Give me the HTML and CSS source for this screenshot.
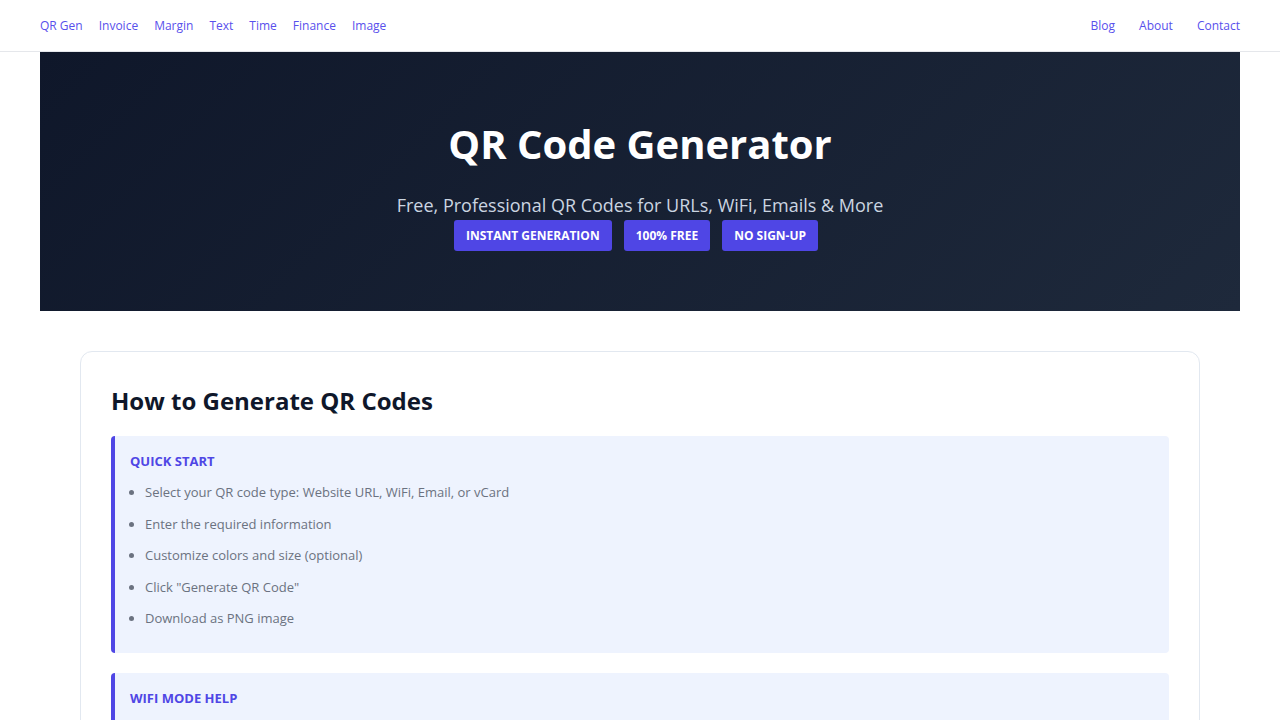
FILE: index.html
```html
<!DOCTYPE html>
<html lang="en">
<head>
  <meta charset="UTF-8">
  <meta name="viewport" content="width=device-width, initial-scale=1.0">
  <title>QR Code Generator</title>
  <link rel="stylesheet" href="styles.css">
</head>
<body>
  <header class="topbar">
    <nav class="nav-left">
      <a href="#">QR Gen</a>
      <a href="#">Invoice</a>
      <a href="#">Margin</a>
      <a href="#">Text</a>
      <a href="#">Time</a>
      <a href="#">Finance</a>
      <a href="#">Image</a>
    </nav>
    <nav class="nav-right">
      <a href="#">Blog</a>
      <a href="#">About</a>
      <a href="#">Contact</a>
    </nav>
  </header>

  <section class="hero">
    <h1>QR Code Generator</h1>
    <p class="subtitle">Free, Professional QR Codes for URLs, WiFi, Emails &amp; More</p>
    <div class="badges">
      <span class="badge">Instant Generation</span>
      <span class="badge">100% Free</span>
      <span class="badge">No Sign-Up</span>
    </div>
  </section>

  <main class="card">
    <h2>How to Generate QR Codes</h2>

    <div class="help-box">
      <h3>Quick Start</h3>
      <ul>
        <li>Select your QR code type: Website URL, WiFi, Email, or vCard</li>
        <li>Enter the required information</li>
        <li>Customize colors and size (optional)</li>
        <li>Click "Generate QR Code"</li>
        <li>Download as PNG image</li>
      </ul>
    </div>

    <div class="help-box">
      <h3>WiFi Mode Help</h3>
      <ul>
        <li>Enter your network name (SSID) exactly as it appears</li>
        <li>Choose the security type used by your router</li>
        <li>Enter the password and generate the code</li>
      </ul>
    </div>
  </main>
</body>
</html>
```

FILE: styles.css
```css
* {
  box-sizing: border-box;
}

body {
  margin: 0;
  font-family: "Open Sans", "Noto Sans", sans-serif;
  background: #ffffff;
  color: #0f172a;
}

.topbar {
  display: flex;
  justify-content: space-between;
  align-items: center;
  height: 52px;
  padding: 0 40px 1px;
  border-bottom: 1px solid #e5e7eb;
  background: #fff;
}

.nav-left,
.nav-right {
  display: flex;
  gap: 16px;
}

.nav-right {
  gap: 24px;
}

.topbar a {
  color: #5850ec;
  text-decoration: none;
  font-size: 12px;
}

.hero {
  margin: 0 40px;
  height: 259px;
  background: linear-gradient(135deg, #0f172a 0%, #1e293b 100%);
  text-align: center;
  padding-top: 64px;
}

.hero h1 {
  margin: 0;
  color: #ffffff;
  font-size: 40px;
  font-weight: 700;
  line-height: 56px;
}

.subtitle {
  margin: 21px 0 0;
  color: #cbd5e1;
  font-size: 18px;
  line-height: 24px;
}

.badges {
  display: flex;
  justify-content: center;
  gap: 12px;
  margin-top: 3px;
  padding-right: 8px;
}

.badge {
  background: #4f46e5;
  color: #fff;
  font-size: 12px;
  font-weight: 700;
  text-transform: uppercase;
  padding: 0 12px;
  line-height: 31px;
  border-radius: 3px;
}

.card {
  margin: 40px 80px 0;
  border: 1px solid #e2e8f0;
  border-radius: 12px;
  padding: 29px 30px 0;
}

.card h2 {
  margin: 0 0 15px;
  font-size: 24px;
  font-weight: 700;
  line-height: 40px;
  color: #0f172a;
}

.help-box {
  background: #eef3fe;
  border-left: 4px solid #4f46e5;
  border-radius: 4px;
  padding: 15px 14px 19px 15px;
  margin-bottom: 20px;
}

.help-box h3 {
  margin: 0 0 5px;
  color: #4f46e5;
  font-size: 13px;
  font-weight: 700;
  text-transform: uppercase;
  line-height: 20px;
}

.help-box ul {
  margin: 0;
  padding-left: 15px;
  color: #6b7280;
  font-size: 13px;
}

.help-box li {
  line-height: 20px;
  padding: 6px 0 5.5px;
}
```
